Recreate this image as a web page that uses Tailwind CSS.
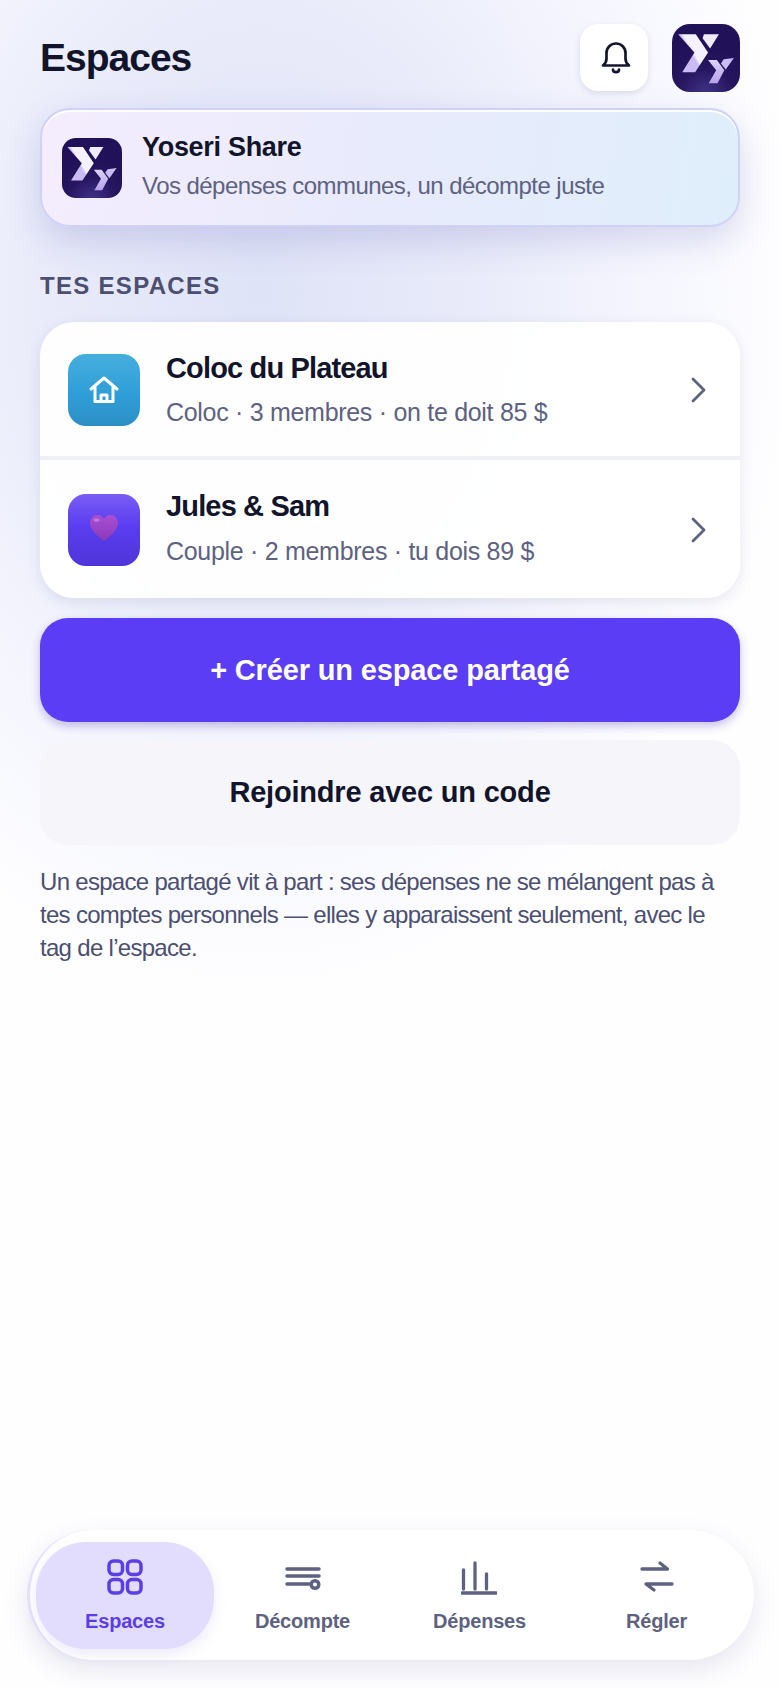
<!DOCTYPE html>
<html lang="fr">
  <head>
    <meta charset="UTF-8" />
    <title>Espaces</title>
    <script src="https://cdn.jsdelivr.net/npm/@tailwindcss/browser@4"></script>
  </head>
  <body class="bg-white">
    <div class="h-[1688px] w-[780px] overflow-hidden flex flex-col font-['Liberation_Sans',sans-serif] bg-[radial-gradient(ellipse_540px_700px_at_260px_290px,#dfe3f7_0%,#e9ebfa_40%,#f6f7fe_75%,#fefeff_100%)]">
      <main class="flex-1 px-10">
        <!-- header -->
        <header class="h-[108px] pt-6 flex items-start justify-between">
          <h1 class="mt-[11px] text-[39px] leading-[45px] font-bold tracking-[-1px] text-[#11142a]">Espaces</h1>
          <div class="flex gap-6">
            <button class="w-[68px] h-[67px] rounded-[18px] bg-white shadow-[0_2px_6px_rgba(60,60,110,0.14)] flex items-center justify-center">
              <svg class="ml-[3px] w-[30px] h-[32px]" viewBox="0 0 30 32" fill="none" stroke="#14162c" stroke-width="2.700" stroke-linecap="round" stroke-linejoin="round">
                <path d="M2 23.500c2.200-1.700 3.500-3.500 3.500-7V11a9.500 9.500 0 0 1 19 0v5.500c0 3.500 1.300 5.300 3.500 7z" />
                <path d="M12 27.500c0 3.500 6 3.500 6 0" />
              </svg>
            </button>
            <div class="w-[68px] h-[68px] rounded-[18px] overflow-hidden">
              <svg class="w-full h-full" viewBox="0 0 100 100">
                <defs>
                  <radialGradient id="logoBg" cx="0.5" cy="1.05" r="0.75"><stop offset="0" stop-color="#43348a" /><stop offset="0.55" stop-color="#26165f" /><stop offset="1" stop-color="#201158" /></radialGradient>
                  <linearGradient id="logoFg" x1="0.8" y1="0.3" x2="0.2" y2="0.75"><stop offset="0.45" stop-color="#f5f1fe" /><stop offset="0.55" stop-color="#cabbf4" /></linearGradient>
                  <linearGradient id="logoFg2" x1="0" y1="0" x2="0" y2="1"><stop offset="0" stop-color="#dcd2f9" /><stop offset="1" stop-color="#b5a2ea" /></linearGradient>
                </defs>
                <rect width="100" height="100" fill="url(#logoBg)" />
                <path d="M9 15H35L53 42L34 71H15L33 42Z" fill="url(#logoFg)" />
                <path d="M47 15H69L56 36L45 21Z" fill="#efeafc" />
                <path d="M53 53H66L77 68L67 87H54L65 68Z" fill="url(#logoFg2)" />
                <path d="M76 52L91 50L79 67L72 58Z" fill="#c9bbf4" />
              </svg>
            </div>
          </div>
        </header>

        <!-- banner -->
        <section class="h-[119px] rounded-[30px] border-2 border-[#cfd2f4] bg-[linear-gradient(100deg,#f4edfe_0%,#e9ebfc_45%,#dfeefb_100%)] shadow-[0_14px_36px_rgba(80,80,175,0.2),inset_0_2px_0_#ffffff] flex items-center pl-[20px] gap-5">
          <div class="w-[60px] h-[60px] rounded-[14px] overflow-hidden shrink-0">
            <svg class="w-full h-full" viewBox="0 0 100 100">
              <rect width="100" height="100" fill="url(#logoBg)" />
              <path d="M9 15H35L53 42L34 71H15L33 42Z" fill="url(#logoFg)" />
              <path d="M47 15H69L56 36L45 21Z" fill="#efeafc" />
              <path d="M53 53H66L77 68L67 87H54L65 68Z" fill="url(#logoFg2)" />
              <path d="M76 52L91 50L79 67L72 58Z" fill="#c9bbf4" />
            </svg>
          </div>
          <div class="-mt-[4px]">
            <p class="text-[27px] leading-[32px] font-bold tracking-[-0.3px] text-[#11142a]">Yoseri Share</p>
            <p class="mt-[8px] text-[24px] leading-[30px] tracking-[-0.55px] text-[#5e6280]">Vos dépenses communes, un décompte juste</p>
          </div>
        </section>

        <h2 class="mt-[45px] text-[24px] leading-[28px] font-bold tracking-[1.3px] text-[#4c4f70]">TES ESPACES</h2>

        <!-- spaces list -->
        <section class="mt-[22px] rounded-[34px] bg-white/95 shadow-[0_4px_14px_rgba(70,70,130,0.12)] overflow-hidden">
          <div class="h-[138px] flex items-center pl-7 pr-[32px] border-b-4 border-[#eff0f6]">
            <div class="mt-[2px] w-[72px] h-[72px] rounded-[18px] bg-[linear-gradient(180deg,#45aedd_0%,#2f9ed8_55%,#2c8fc4_100%)] flex items-center justify-center">
              <svg class="w-[32px] h-[32px]" viewBox="0 0 32 32" fill="none" stroke="#ffffff" stroke-width="3" stroke-linecap="round" stroke-linejoin="round">
                <path d="M3 15L16 4L29 15" />
                <path d="M7 13V27.500H25V13" />
                <path d="M13 27V21H19V27" />
              </svg>
            </div>
            <div class="ml-[26px] flex-1 pt-[1px]">
              <p class="text-[29px] leading-[34px] font-bold tracking-[-0.85px] text-[#11142a]">Coloc du Plateau</p>
              <p class="mt-[11px] text-[25px] leading-[32px] tracking-[-0.3px] text-[#5e6280]">Coloc · 3 membres · on te doit 85 $</p>
            </div>
            <svg class="mt-[2px] w-[20px] h-[28px]" viewBox="0 0 20 28" fill="none" stroke="#5e6280" stroke-width="2.800" stroke-linecap="round" stroke-linejoin="round"><path d="M5 3L16 14L5 25" /></svg>
          </div>
          <div class="h-[138px] flex items-center pl-7 pr-[32px]">
            <div class="mt-[2px] w-[72px] h-[72px] rounded-[18px] bg-[linear-gradient(180deg,#7a5df5_0%,#5a3df0_45%,#4f35d8_100%)] flex items-center justify-center">
              <svg class="-mt-[4px] w-[30px] h-[28px]" viewBox="0 0 30 28">
                <defs><linearGradient id="heart" x1="0" y1="0" x2="0" y2="1"><stop offset="0" stop-color="#a94fd4" /><stop offset="1" stop-color="#8a38b8" /></linearGradient></defs>
                <path d="M15 27C9 22 1 16.500 1 9C1 4.500 4.500 1 8.500 1C11 1 13.500 2.300 15 5C16.500 2.300 19 1 21.500 1C25.500 1 29 4.500 29 9C29 16.500 21 22 15 27Z" fill="url(#heart)" />
                <ellipse cx="7.500" cy="6" rx="3" ry="1.800" fill="#d9a6ef" opacity="0.5" />
              </svg>
            </div>
            <div class="ml-[26px] flex-1 pb-[2px]">
              <p class="text-[29px] leading-[34px] font-bold tracking-[-0.85px] text-[#11142a]">Jules &amp; Sam</p>
              <p class="mt-[12px] text-[25px] leading-[32px] tracking-[-0.3px] text-[#5e6280]">Couple · 2 membres · tu dois 89 $</p>
            </div>
            <svg class="mt-[2px] w-[20px] h-[28px]" viewBox="0 0 20 28" fill="none" stroke="#5e6280" stroke-width="2.800" stroke-linecap="round" stroke-linejoin="round"><path d="M5 3L16 14L5 25" /></svg>
          </div>
        </section>

        <button class="mt-[20px] w-full h-[104px] pt-[2px] rounded-[28px] bg-[#5a3df5] shadow-[0_4px_10px_rgba(70,50,180,0.3)] text-[29px] font-bold tracking-[-0.15px] text-white">+ Créer un espace partagé</button>
        <button class="mt-[18px] w-full h-[105px] rounded-[28px] bg-[#f5f5fa] text-[29px] font-bold tracking-[-0.2px] text-[#11142a]">Rejoindre avec un code</button>

        <p class="mt-[20px] text-[24px] leading-[33px] tracking-[-0.7px] text-[#4c4f70]">Un espace partagé vit à part : ses dépenses ne se mélangent pas à tes comptes personnels — elles y apparaissent seulement, avec le tag de l’espace.</p>
      </main>

      <!-- bottom nav -->
      <nav class="ml-[27px] mr-[26px] mb-[28px] h-[130px] rounded-[65px] bg-white border-l-[3px] border-[#e6e2fb] shadow-[0_10px_26px_rgba(70,70,130,0.13)] flex items-center pl-[6px] pr-[8px]">
        <a class="w-[178px] h-[107px] rounded-[50px] bg-[#e2dcfd] shadow-[0_6px_14px_rgba(90,70,200,0.1)] flex flex-col items-center">
          <svg class="mt-[17px] w-[36px] h-[36px]" viewBox="0 0 36 36" fill="none" stroke="#5a3fe6" stroke-width="3.500">
            <rect x="2" y="2" width="13.500" height="13.500" rx="4.500" />
            <rect x="20.500" y="2" width="13.500" height="13.500" rx="4.500" />
            <rect x="2" y="20.500" width="13.500" height="13.500" rx="4.500" />
            <rect x="20.500" y="20.500" width="13.500" height="13.500" rx="4.500" />
          </svg>
          <span class="mt-[14px] text-[20px] leading-[24px] font-bold tracking-[-0.2px] text-[#5a3fe6]">Espaces</span>
        </a>
        <a class="w-[177px] h-[107px] flex flex-col items-center">
          <svg class="mt-[17px] w-[36px] h-[36px]" viewBox="0 0 36 36" fill="none" stroke="#5e6280" stroke-width="3.500" stroke-linecap="round">
            <path d="M2 10H34" /><path d="M2 17H34" /><path d="M2 25H24" /><circle cx="30" cy="25.500" r="3.800" />
          </svg>
          <span class="mt-[14px] text-[20px] leading-[24px] font-bold tracking-[-0.2px] text-[#5e6280]">Décompte</span>
        </a>
        <a class="w-[177px] h-[107px] flex flex-col items-center">
          <svg class="mt-[17px] -ml-[2px] w-[36px] h-[36px]" viewBox="0 0 36 36" fill="none" stroke="#5e6280" stroke-width="3.300" stroke-linecap="round">
            <path d="M2.500 11V30" /><path d="M14 4V30" /><path d="M25.500 15V30" /><path d="M1 34H35" />
          </svg>
          <span class="mt-[14px] text-[20px] leading-[24px] font-bold tracking-[-0.2px] text-[#5e6280]">Dépenses</span>
        </a>
        <a class="w-[177px] h-[107px] flex flex-col items-center">
          <svg class="mt-[17px] w-[36px] h-[36px]" viewBox="0 0 36 36" fill="none" stroke="#5e6280" stroke-width="3.300" stroke-linecap="round" stroke-linejoin="round">
            <path d="M3 10H28.500L21 4" /><path d="M33 25H7L15 31" />
          </svg>
          <span class="mt-[14px] text-[20px] leading-[24px] font-bold tracking-[-0.2px] text-[#5e6280]">Régler</span>
        </a>
      </nav>
    </div>
  </body>
</html>
